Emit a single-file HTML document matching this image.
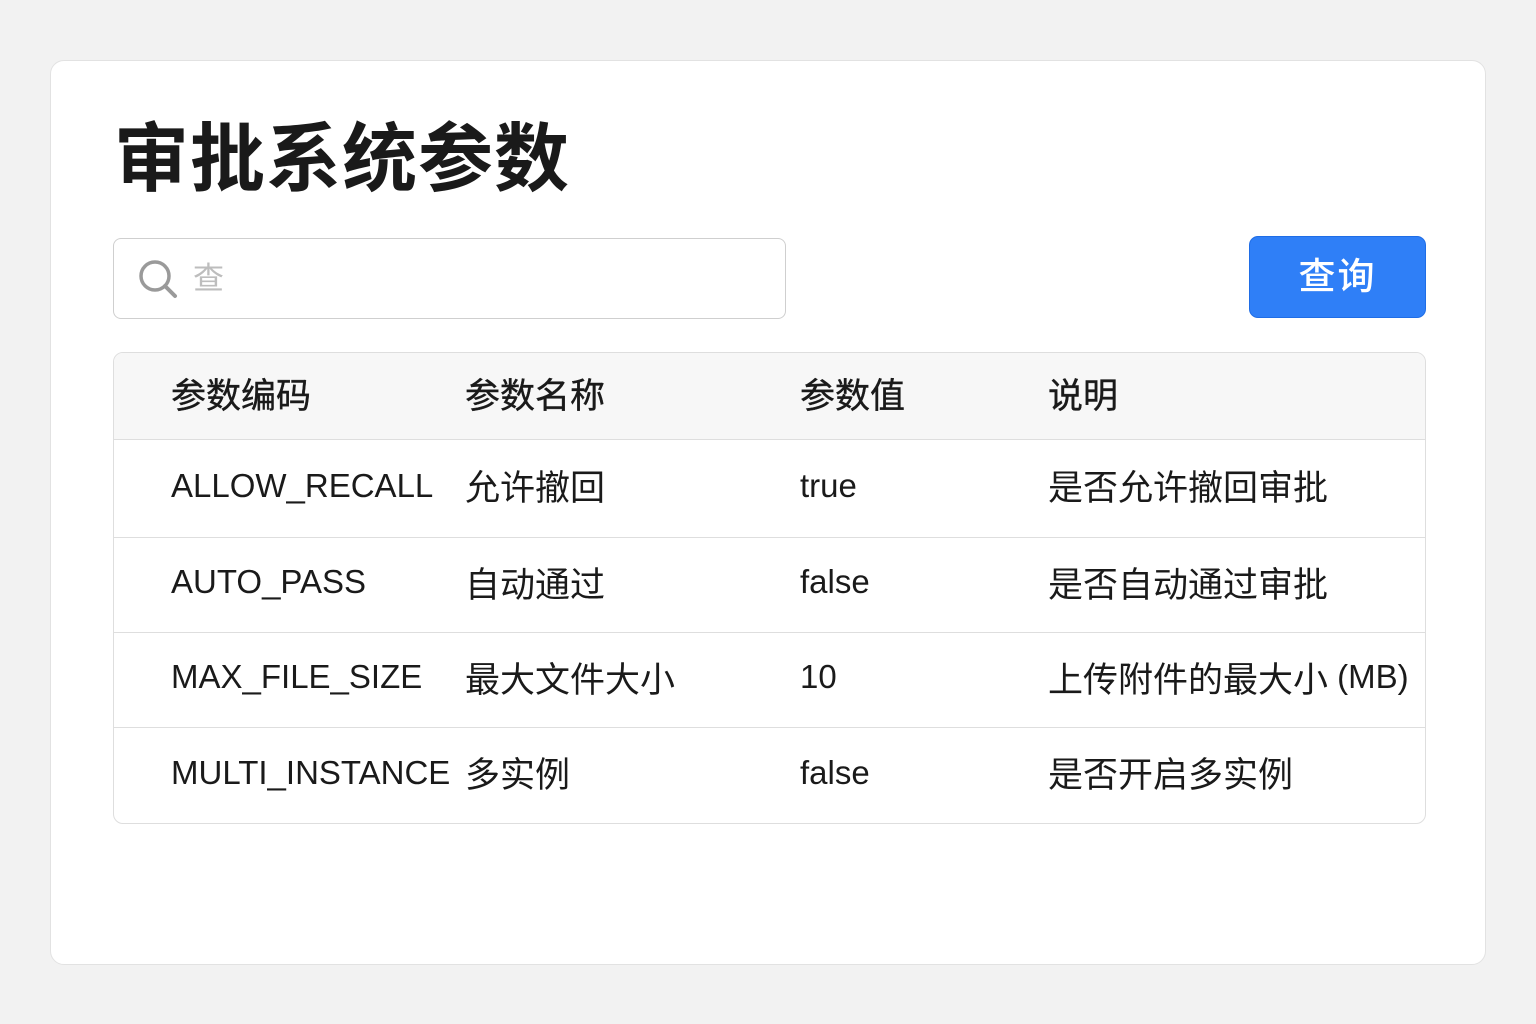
<!DOCTYPE html>
<html><head><meta charset="utf-8"><style>
html,body{margin:0;padding:0}
body{width:1536px;height:1024px;background:#f2f2f2;position:relative;font-family:"Liberation Sans","Noto Sans CJK SC",sans-serif;color:#1a1a1a;overflow:hidden}
.card{position:absolute;left:50px;top:60px;width:1434px;height:903px;background:#fff;border:1px solid #e2e2e2;border-radius:14px}
h1{position:absolute;left:114px;top:111px;margin:0;font-size:75px;font-weight:700;line-height:96px;letter-spacing:1px;color:#1a1a1a}
.search{position:absolute;left:113px;top:238px;width:671px;height:79px;border:1.5px solid #cfcfcf;border-radius:8px;background:#fff}
.search svg{position:absolute;left:24px;top:20px}
.search span{position:absolute;left:79px;top:20px;font-size:31px;color:#bdbdbd;line-height:40px}
.btn{position:absolute;left:1249px;top:236px;width:177px;height:82px;background:#2f7ff7;border:1px solid #1f6de6;box-sizing:border-box;border-radius:9px;color:#fff;font-size:37px;font-weight:500;text-align:center;line-height:80px;letter-spacing:2px}
.tbl{position:absolute;left:113px;top:352px;width:1311px;height:470px;border:1.5px solid #dedede;border-radius:10px;overflow:hidden}
.row{position:absolute;left:0;width:100%;border-bottom:1.5px solid #dedede}
.row.h{background:#f7f7f7}
.row:last-child{border-bottom:none}
.c{position:absolute;top:-3px;white-space:nowrap;font-size:35px;height:100%;display:flex;align-items:center}
.l{font-size:33px}
.h .c{font-weight:400;-webkit-text-stroke:0.4px #1a1a1a}
</style></head><body>
<div class="card"></div>
<h1>审批系统参数</h1>
<div class="search"><svg width="40" height="40" viewBox="0 0 40 40"><circle cx="17" cy="17" r="14" fill="none" stroke="#9a9a9a" stroke-width="3.5"/><line x1="27" y1="27" x2="37" y2="37" stroke="#9a9a9a" stroke-width="4" stroke-linecap="round"/></svg><span>查</span></div>
<div class="btn">查询</div>
<div class="tbl">
<div class="row h" style="top:0;height:86px"><div class="c" style="left:57px">参数编码</div><div class="c" style="left:351px">参数名称</div><div class="c" style="left:686px">参数值</div><div class="c" style="left:934px">说明</div></div>
<div class="row" style="top:87px;height:97px"><div class="c l" style="left:57px">ALLOW_RECALL</div><div class="c" style="left:351px">允许撤回</div><div class="c l" style="left:686px">true</div><div class="c" style="left:934px">是否允许撤回审批</div></div>
<div class="row" style="top:185px;height:94px"><div class="c l" style="left:57px">AUTO_PASS</div><div class="c" style="left:351px">自动通过</div><div class="c l" style="left:686px">false</div><div class="c" style="left:934px">是否自动通过审批</div></div>
<div class="row" style="top:280px;height:94px"><div class="c l" style="left:57px">MAX_FILE_SIZE</div><div class="c" style="left:351px">最大文件大小</div><div class="c l" style="left:686px">10</div><div class="c" style="left:934px">上传附件的最大小 <span class="l">&nbsp;(MB)</span></div></div>
<div class="row" style="top:375px;height:95px"><div class="c l" style="left:57px">MULTI_INSTANCE</div><div class="c" style="left:351px">多实例</div><div class="c l" style="left:686px">false</div><div class="c" style="left:934px">是否开启多实例</div></div>
</div>
</body></html>
